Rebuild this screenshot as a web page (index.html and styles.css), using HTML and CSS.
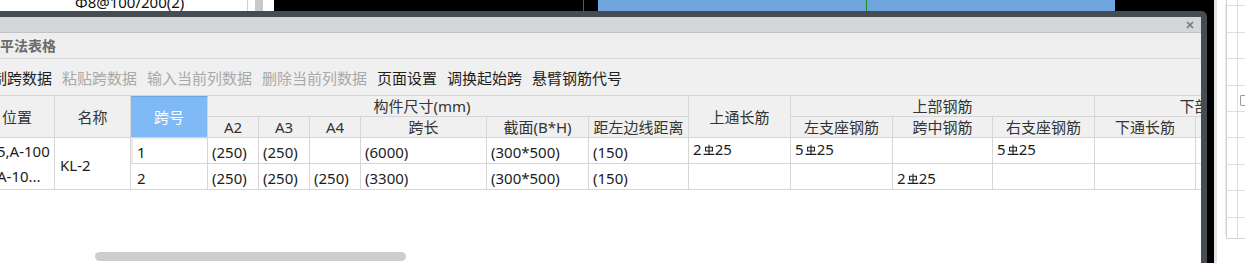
FILE: index.html
```html
<!DOCTYPE html>
<html lang="zh-CN">
<head>
<meta charset="utf-8">
<title>平法表格</title>
<link rel="stylesheet" href="styles.css">
</head>
<body>
<div class="screen">
  <div class="main">
    <div class="topstrip">
      <div class="tree"><span class="tree-text">Φ8@100/200(2)</span></div>
      <div class="tree-line"></div>
      <div class="tree-gap"></div>
      <div class="tree-scroll"></div>
      <div class="tree-gap2"></div>
      <div class="view-black"></div>
      <div class="view-blue"></div>
      <div class="view-black2"></div>
    </div>
    <div class="dialog">
      <div class="titlebar">
        <svg class="close" viewBox="0 0 8 8" width="8" height="8"><path d="M1 1L7 7M7 1L1 7" stroke="#7a7a7a" stroke-width="1.7" fill="none"/></svg>
      </div>
      <div class="panel-title">平法表格</div>
      <div class="toolbar">
        <span class="tool">复制跨数据</span>
        <span class="tool disabled">粘贴跨数据</span>
        <span class="tool disabled">输入当前列数据</span>
        <span class="tool disabled">删除当前列数据</span>
        <span class="tool">页面设置</span>
        <span class="tool">调换起始跨</span>
        <span class="tool">悬臂钢筋代号</span>
      </div>
      <div class="grid-area">
        <div class="table-clip">
          <table class="sheet">
            <colgroup>
              <col class="w75"><col class="w76"><col class="w77">
              <col class="w51"><col class="w51"><col class="w51">
              <col class="w126"><col class="w102"><col class="w100">
              <col class="w102"><col class="w102"><col class="w100"><col class="w102">
              <col class="w101"><col class="w129">
            </colgroup>
            <thead>
              <tr class="h1">
                <th rowspan="2">位置</th>
                <th rowspan="2">名称</th>
                <th rowspan="2" class="sel">跨号</th>
                <th colspan="6" class="shift">构件尺寸(mm)</th>
                <th rowspan="2">上通长筋</th>
                <th colspan="3">上部钢筋</th>
                <th colspan="2">下部钢筋</th>
              </tr>
              <tr class="h2">
                <th>A2</th><th>A3</th><th>A4</th>
                <th>跨长</th><th>截面(B*H)</th><th>距左边线距离</th>
                <th>左支座钢筋</th><th>跨中钢筋</th><th>右支座钢筋</th>
                <th>下通长筋</th><th>下部钢筋</th>
              </tr>
            </thead>
            <tbody>
              <tr class="d">
                <td rowspan="2" class="pos">5,A-100<br>A-10...</td>
                <td rowspan="2" class="name">KL-2</td>
                <td class="span edit">1</td>
                <td>(250)</td><td>(250)</td><td></td>
                <td>(6000)</td><td>(300*500)</td><td>(150)</td>
                <td class="bar">2<svg class="rebar" viewBox="0 0 12 12" width="12" height="12"><path d="M6 0.8V10.2M2.6 3.2H9.4V7H2.6ZM0.6 10.4H11.4" stroke="currentColor" stroke-width="1.1" fill="none"/></svg>25</td>
                <td class="bar">5<svg class="rebar" viewBox="0 0 12 12" width="12" height="12"><path d="M6 0.8V10.2M2.6 3.2H9.4V7H2.6ZM0.6 10.4H11.4" stroke="currentColor" stroke-width="1.1" fill="none"/></svg>25</td>
                <td></td>
                <td class="bar">5<svg class="rebar" viewBox="0 0 12 12" width="12" height="12"><path d="M6 0.8V10.2M2.6 3.2H9.4V7H2.6ZM0.6 10.4H11.4" stroke="currentColor" stroke-width="1.1" fill="none"/></svg>25</td>
                <td></td><td></td>
              </tr>
              <tr class="d">
                <td class="span">2</td>
                <td>(250)</td><td>(250)</td><td>(250)</td>
                <td>(3300)</td><td>(300*500)</td><td>(150)</td>
                <td></td><td></td>
                <td>2<svg class="rebar" viewBox="0 0 12 12" width="12" height="12"><path d="M6 0.8V10.2M2.6 3.2H9.4V7H2.6ZM0.6 10.4H11.4" stroke="currentColor" stroke-width="1.1" fill="none"/></svg>25</td>
                <td></td><td></td><td></td>
              </tr>
            </tbody>
          </table>
        </div>
        <div class="hscroll"><div class="hthumb"></div></div>
      </div>
    </div>
  </div>
  <div class="side">
    <div class="side-grid"><span class="side-mark"></span></div>
  </div>
</div>
</body>
</html>
```
FILE: styles.css
```css
* { box-sizing: border-box; }
html, body { margin: 0; padding: 0; }
body {
  width: 1245px;
  height: 263px;
  overflow: hidden;
  background: #000;
  font-family: "Noto Sans", "Noto Sans CJK SC", sans-serif;
  font-size: 15px;
  color: #222;
}
.screen { display: flex; width: 1245px; height: 263px; }
.main {
  width: 1214px;
  height: 263px;
  display: flex;
  flex-direction: column;
  background: #000;
}

/* background application strip */
.topstrip { display: flex; height: 11px; flex: none; overflow: hidden; }
.tree { width: 247px; background: #fff; padding-left: 75px; overflow: hidden; }
.tree-text { display: block; line-height: 11px; margin-top: -3px; color: #111; white-space: nowrap; }
.tree-line { width: 1px; background: #cfcfcf; }
.tree-gap { width: 7px; background: #fff; }
.tree-scroll { width: 8px; background: #c9c9c9; }
.tree-gap2 { width: 11px; background: #fff; }
.view-black {
  width: 324px;
  background: linear-gradient(to right, #000 309px, #128a22 309px, #128a22 310px, #000 310px);
}
.view-blue {
  width: 517px;
  background: linear-gradient(to right, #6fa4dc 268px, #14922a 268px, #14922a 269px, #6fa4dc 269px);
}
.view-black2 { flex: 1; background: #000; }

/* dialog */
.dialog {
  width: 1207px;
  flex: 1;
  display: flex;
  flex-direction: column;
  border-top: 6px solid #464c53;
  border-right: 6px solid #464c53;
  border-top-right-radius: 6px;
  background: #eeeeee;
  overflow: hidden;
}
.titlebar {
  height: 16px;
  flex: none;
  background: #d4d6da;
  border-bottom: 1px solid #c1c3c7;
  display: flex;
  align-items: center;
  justify-content: flex-end;
  padding-right: 7px;
}
.close { display: block; }
.panel-title {
  height: 26px;
  flex: none;
  background: #eeeeee;
  border-bottom: 1px solid #d8d8d8;
  font-size: 14px;
  font-weight: 700;
  color: #6a6a6a;
  line-height: 25px;
  white-space: nowrap;
}
.toolbar {
  height: 36px;
  flex: none;
  display: flex;
  align-items: center;
  gap: 10px;
  margin-left: -23px;
  background: #f0f0f0;
  white-space: nowrap;
}
.tool { color: #1f1f1f; }
.tool.disabled { color: #a9a9a9; }

.grid-area {
  flex: 1;
  background: #fff;
  display: flex;
  flex-direction: column;
  overflow: hidden;
}
.table-clip { overflow: hidden; width: 1201px; flex: none; }
.sheet {
  table-layout: fixed;
  border-collapse: separate;
  border-spacing: 0;
  width: 1345px;
  margin-left: -20px;
  border-top: 1px solid #d6d6d6;
  line-height: 18px;
}
.w75 { width: 75px; } .w76 { width: 76px; } .w77 { width: 77px; }
.w51 { width: 51px; } .w126 { width: 126px; } .w102 { width: 102px; }
.w100 { width: 100px; } .w101 { width: 101px; } .w129 { width: 129px; }

.sheet th, .sheet td {
  border-right: 1px solid #d6d6d6;
  border-bottom: 1px solid #d6d6d6;
  padding: 0;
  white-space: nowrap;
  overflow: hidden;
}
.sheet th {
  background: #f0f0f0;
  font-weight: 400;
  color: #333;
  text-align: center;
  vertical-align: middle;
}
.h1 { height: 21px; }
.h2 { height: 21px; }
.d { height: 26px; }
.sheet th.sel {
  background: #7fbaf6;
  color: #fff;
  border-top: 1px solid #6aa6e6;
}
.sheet th.shift { padding-right: 52px; }
.sheet td {
  padding-left: 4px;
  color: #1c1c1c;
  vertical-align: middle;
  padding-top: 2px;
}
.sheet td.bar { padding-top: 0; padding-bottom: 3px; }
.sheet td.pos { padding-left: 17px; line-height: 25px; padding-top: 0; }
.sheet td.name { padding-left: 5px; }
.sheet td.span { padding-left: 6px; }
.sheet td.edit { box-shadow: inset 2px 1px 0 #ececec; }
.rebar { display: inline-block; vertical-align: -1px; margin: 0 0 0 1px; }

.hscroll { margin-top: auto; height: 9px; padding-left: 95px; margin-bottom: 2px; flex: none; }
.hthumb { width: 311px; height: 9px; background: #cdcdcd; border-radius: 5px; }

/* side panel */
.side {
  width: 31px;
  height: 263px;
  background: #fff;
  border-left: 3px solid #e3e3e3;
  padding-left: 1px;
  display: flex;
}
.side-grid {
  position: relative;
  margin-left: 8px;
  width: 19px;
  height: 239px;
  border-left: 1px solid #d4d4d4;
  border-bottom: 1px solid #d4d4d4;
  box-shadow: -5px 0 0 -4px #e6e6e6;
  background:
    linear-gradient(to right, transparent 10px, #dedede 10px, #dedede 11px, transparent 11px),
    repeating-linear-gradient(to bottom, transparent 0, transparent 5.4px, #dedede 5.4px, #dedede 6.4px, transparent 6.4px, transparent 26.4px);
}
.side-mark {
  position: absolute;
  left: 13px;
  top: 95px;
  width: 6px;
  height: 11px;
  border: 1px solid #9a9a9a;
  border-right: none;
  border-radius: 2px 0 0 2px;
}
```
